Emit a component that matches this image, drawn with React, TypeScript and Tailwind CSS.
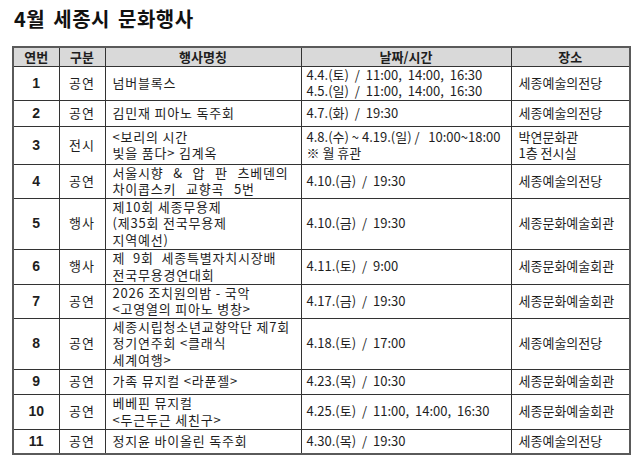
import React from "react";

type Row = {
  no: string;
  kind: string;
  name: string[];
  date: string[];
  place: string[];
  h: number;
  nameWs?: string;
  dateWs?: string;
};

const rows: Row[] = [
  { no: "1", kind: "공연", name: ["넘버블록스"], date: ["4.4.(토) / 11:00, 14:00, 16:30", "4.5.(일) / 11:00, 14:00, 16:30"], place: ["세종예술의전당"], h: 34 },
  { no: "2", kind: "공연", name: ["김민재 피아노 독주회"], date: ["4.7.(화) / 19:30"], place: ["세종예술의전당"], h: 26 },
  { no: "3", kind: "전시", name: ["<보리의 시간", "빛을 품다> 김계옥"], date: ["4.8.(수) ~ 4.19.(일) /   10:00~18:00", "※ 월 휴관"], place: ["박연문화관", "1층 전시실"], h: 38, dateWs: "[word-spacing:0px]" },
  { no: "4", kind: "공연", name: ["서울시향 & 압 판 츠베덴의", "차이콥스키 교향곡 5번"], date: ["4.10.(금) / 19:30"], place: ["세종예술의전당"], h: 33, nameWs: "[word-spacing:6px]" },
  { no: "5", kind: "행사", name: ["제10회 세종무용제", "(제35회 전국무용제", "지역예선)"], date: ["4.10.(금) / 19:30"], place: ["세종문화예술회관"], h: 51 },
  { no: "6", kind: "행사", name: ["제 9회 세종특별자치시장배", "전국무용경연대회"], date: ["4.11.(토) / 9:00"], place: ["세종문화예술회관"], h: 35, nameWs: "[word-spacing:4px]" },
  { no: "7", kind: "공연", name: ["2026 조치원의밤 - 국악", "<고영열의 피아노 병창>"], date: ["4.17.(금) / 19:30"], place: ["세종문화예술회관"], h: 34 },
  { no: "8", kind: "공연", name: ["세종시립청소년교향악단 제7회", "정기연주회 <클래식", "세계여행>"], date: ["4.18.(토) / 17:00"], place: ["세종예술의전당"], h: 51 },
  { no: "9", kind: "공연", name: ["가족 뮤지컬 <라푼젤>"], date: ["4.23.(목) / 10:30"], place: ["세종문화예술회관"], h: 25 },
  { no: "10", kind: "공연", name: ["베베핀 뮤지컬", "<두근두근 세친구>"], date: ["4.25.(토) / 11:00, 14:00, 16:30"], place: ["세종문화예술회관"], h: 35 },
  { no: "11", kind: "공연", name: ["정지윤 바이올린 독주회"], date: ["4.30.(목) / 19:30"], place: ["세종예술의전당"], h: 25 },
];

const Lines = ({ lines }: { lines: string[] }) => (
  <>
    {lines.map((l, i) => (
      <div key={i} className="whitespace-pre">
        {l}
      </div>
    ))}
  </>
);

const App = () => {
  return (
    <div
      className="w-[640px] h-[463px] bg-white text-[#1e1e1e] overflow-hidden"
      style={{ fontFamily: '"Noto Sans CJK KR", "Noto Sans", sans-serif' }}
    >
      <h1 className="pl-[14px] pt-[6px] text-[20px] font-bold leading-[26px] tracking-[0.5px] [word-spacing:3px] text-[#111]">
        4월 세종시 문화행사
      </h1>
      <table className="mt-[14px] ml-[12px] w-[617px] border-collapse border-2 border-[#5a5a5a] text-[13px] leading-[16.5px] table-fixed">
        <colgroup>
          <col className="w-[46px]" />
          <col className="w-[46px]" />
          <col className="w-[196px]" />
          <col className="w-[210px]" />
          <col className="w-[119px]" />
        </colgroup>
        <thead>
          <tr className="h-[19px] bg-[#d9d9d9]">
            <th className="border border-[#333] p-0 font-bold">연번</th>
            <th className="border border-[#333] p-0 font-bold">구분</th>
            <th className="border border-[#333] p-0 font-bold">행사명칭</th>
            <th className="border border-[#333] p-0 font-bold">날짜/시간</th>
            <th className="border border-[#333] p-0 font-bold">장소</th>
          </tr>
        </thead>
        <tbody>
          {rows.map((r) => (
            <tr key={r.no} style={{ height: r.h }}>
              <td
                className="border border-[#333] p-0 text-center align-middle font-bold text-[14px]"
                style={{ fontFamily: '"Liberation Sans", Arial, sans-serif' }}
              >
                {r.no}
              </td>
              <td className="border border-[#333] p-0 text-center align-middle tracking-[1px]">{r.kind}</td>
              <td className={`border border-[#333] py-0 pl-[7px] pr-0 align-middle tracking-[0.8px] ${r.nameWs ?? ""}`}>
                <Lines lines={r.name} />
              </td>
              <td className={`border border-[#333] py-0 pl-[5px] pr-0 align-middle ${r.dateWs ?? "[word-spacing:3px]"}`}>
                <Lines lines={r.date} />
              </td>
              <td className="border border-[#333] py-0 pl-[7px] pr-0 align-middle">
                <Lines lines={r.place} />
              </td>
            </tr>
          ))}
        </tbody>
      </table>
    </div>
  );
};

export default App;
